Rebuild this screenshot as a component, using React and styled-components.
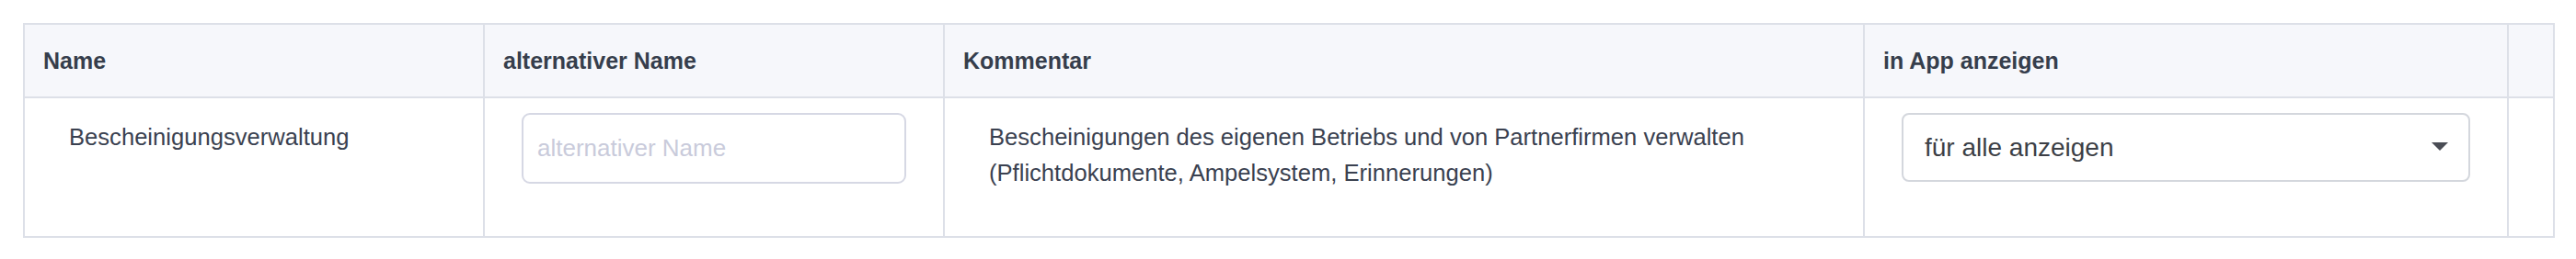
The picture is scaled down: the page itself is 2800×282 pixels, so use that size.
import styled, { createGlobalStyle } from "styled-components";

const GlobalStyle = createGlobalStyle`
  html, body {
    margin: 0;
    padding: 0;
    background: #ffffff;
    font-family: "Liberation Sans", Arial, Helvetica, sans-serif;
  }
  * {
    box-sizing: border-box;
  }
`;

const Page = styled.div`
  padding: 25px;
`;

const Table = styled.table`
  width: 100%;
  table-layout: fixed;
  border-collapse: collapse;
  border: 2px solid #dde0e8;
`;

const HeadCell = styled.th`
  height: 80px;
  padding: 0 20px;
  text-align: left;
  vertical-align: middle;
  background: #f6f7fb;
  border: 2px solid #dde0e8;
  color: #363e4c;
  font-size: 25px;
  font-weight: bold;
`;

const Cell = styled.td`
  height: 152px;
  padding: 16px 40px;
  vertical-align: top;
  border: 2px solid #dde0e8;
`;

const CellText = styled.div`
  padding: 7px 8px 0;
  color: #3a4150;
  font-size: 25.6px;
  line-height: 39px;
`;

const TextInput = styled.input`
  display: block;
  width: 100%;
  height: 77px;
  padding: 0 15px;
  border: 2px solid #d6d8e4;
  border-radius: 9px;
  background: #ffffff;
  font-family: inherit;
  font-size: 26px;
  color: #3a4150;
  outline: none;

  &::placeholder {
    color: #c9cbdb;
  }
`;

const SelectWrap = styled.div`
  position: relative;
  width: 100%;
`;

const Select = styled.select`
  display: block;
  width: 100%;
  height: 75px;
  padding: 0 60px 0 23px;
  border: 2px solid #d4d7dd;
  border-radius: 8px;
  background: #ffffff;
  appearance: none;
  font-family: inherit;
  font-size: 28px;
  color: #3c3f46;
  outline: none;
`;

const Arrow = styled.svg`
  position: absolute;
  top: 32px;
  right: 24px;
  width: 18px;
  height: 10px;
  pointer-events: none;
`;

const columns = [
  { title: "Name", width: 500 },
  { title: "alternativer Name", width: 500 },
  { title: "Kommentar", width: 1000 },
  { title: "in App anzeigen", width: 700 },
  { title: "", width: 50 },
];

const App = () => {
  return (
    <Page>
      <GlobalStyle />
      <Table>
        <colgroup>
          {columns.map((c, i) => (
            <col key={i} style={{ width: c.width }} />
          ))}
        </colgroup>
        <thead>
          <tr>
            {columns.map((c, i) => (
              <HeadCell key={i}>{c.title}</HeadCell>
            ))}
          </tr>
        </thead>
        <tbody>
          <tr>
            <Cell>
              <CellText>Bescheinigungsverwaltung</CellText>
            </Cell>
            <Cell>
              <TextInput placeholder="alternativer Name" />
            </Cell>
            <Cell>
              <CellText>
                Bescheinigungen des eigenen Betriebs und von Partnerfirmen verwalten
                <br />
                (Pflichtdokumente, Ampelsystem, Erinnerungen)
              </CellText>
            </Cell>
            <Cell>
              <SelectWrap>
                <Select defaultValue="all">
                  <option value="all">für alle anzeigen</option>
                  <option value="none">nicht anzeigen</option>
                </Select>
                <Arrow viewBox="0 0 18 10">
                  <path d="M0 0 L18 0 L9 9 Z" fill="#4a4d55" />
                </Arrow>
              </SelectWrap>
            </Cell>
            <Cell />
          </tr>
        </tbody>
      </Table>
    </Page>
  );
};

export default App;
